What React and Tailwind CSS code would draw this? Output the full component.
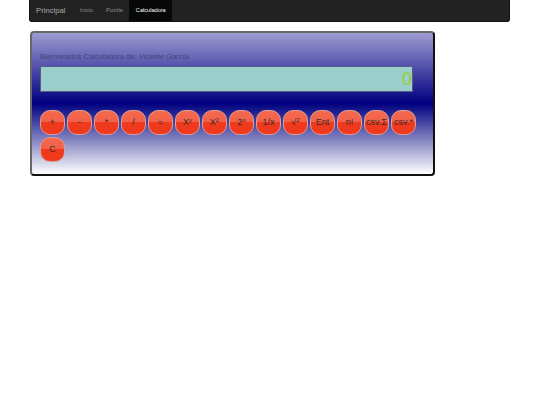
import React from "react";

const Btn = ({ children }) => (
  <button className="w-[25px] h-[25px] rounded-[10px] border border-[#dc9f9b] bg-[linear-gradient(#f4694f_0%,#f06048_50%,#f0391d_50%,#ee3a1f_100%)] text-[#3a2a2a] text-[9px] leading-[10px] flex items-center justify-center p-0 pb-[2px] whitespace-nowrap">
    {children}
  </button>
);

const sup = "text-[6px] leading-[6px] relative -top-[2px]";

export default function App() {
  return (
    <div className="w-[540px] h-[405px] bg-white font-['Liberation_Sans',Arial,sans-serif]">
      <div className="pl-[29px] pr-[30px]">
        <nav className="h-[22px] rounded-b-[3px] bg-[#222222] border border-t-0 border-[#111111] flex items-stretch pl-[6px]">
          <span className="text-[#aaaaaa] text-[7.7px] leading-[21px] w-[37.5px]">Principal</span>
          <span className="text-[#8f8f8f] text-[5.6px] leading-[21px] px-[6.5px]">Inicio</span>
          <span className="text-[#8f8f8f] text-[5.6px] leading-[21px] px-[6.5px]">Puzzle</span>
          <span className="text-white bg-[#080808] text-[5.6px] leading-[21px] px-[6.5px]">Calculadora</span>
        </nav>
      </div>
      <div className="ml-[30px] mt-[9px] w-[405px] h-[145px] rounded-[4px] border-2 border-t-[#666666] border-l-[#666666] border-r-[#111111] border-b-[#111111] bg-[linear-gradient(#9e9bd2_0%,#000080_50%,#ffffff_100%)] pl-[8px] pt-[16px]">
        <p className="text-[#45437a] text-[7.6px] leading-[15px]">
          Bienvenidos Calculadora de: <em>Vicente García</em>
        </p>
        <div className="mt-[2px] w-[373px] h-[26px] bg-[#9bcfcb] border border-[#555d85] text-right text-[#9acd32] text-[18px] leading-[25px] font-normal">
          0
        </div>
        <div className="mt-[18px] flex flex-wrap gap-x-[2px] gap-y-[2px] w-[380px]">
          <Btn>+</Btn>
          <Btn>-</Btn>
          <Btn>*</Btn>
          <Btn>/</Btn>
          <Btn>=</Btn>
          <Btn>X<span className={sup}>y</span></Btn>
          <Btn>X<span className={sup}>2</span></Btn>
          <Btn>2<span className={sup}>n</span></Btn>
          <Btn>1/x</Btn>
          <Btn>√<span className={sup}>2</span></Btn>
          <Btn>Ent</Btn>
          <Btn>n!</Btn>
          <Btn>csv.Σ</Btn>
          <Btn>csv.*</Btn>
          <Btn>C</Btn>
        </div>
      </div>
    </div>
  );
}
